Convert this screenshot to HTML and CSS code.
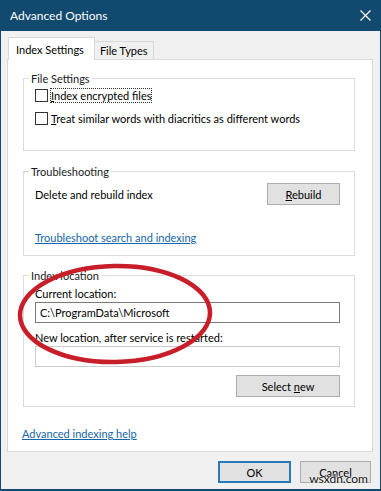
FILE: index.html
```html
<!DOCTYPE html>
<html lang="en">
<head>
    <meta charset="UTF-8">
    <title>Advanced Options</title>
    <link rel="stylesheet" href="styles.css">
</head>
<body>
    <div class="window">
        <div class="titlebar">
            <span>Advanced Options</span>
            <svg class="close" width="11" height="11" viewBox="0 0 11 11">
                <path d="M0.5 0.5 L10.5 10.5 M10.5 0.5 L0.5 10.5" stroke="#fff" stroke-width="1.2" fill="none"/>
            </svg>
        </div>

        <div class="tabs">
            <div class="tab active">Index Settings</div>
            <div class="tab">File Types</div>
        </div>

        <div class="panel">
            <!-- file settings -->
            <fieldset class="group group-files">
                <legend>File Settings</legend>
                <label class="check">
                    <span class="box"></span>
                    <span class="focus"><u>I</u>ndex encrypted files</span>
                </label>
                <label class="check second">
                    <span class="box"></span>
                    <span><u>T</u>reat similar words with diacritics as different words</span>
                </label>
            </fieldset>

            <!-- troubleshooting -->
            <fieldset class="group group-trouble">
                <legend>Troubleshooting</legend>
                <div class="row">
                    <span>Delete and rebuild index</span>
                    <button class="btn btn-rebuild"><u>R</u>ebuild</button>
                </div>
                <a class="link trouble-link" href="#">Troubleshoot search and indexing</a>
            </fieldset>

            <!-- index location -->
            <fieldset class="group group-location">
                <legend>Index location</legend>
                <div class="label">Current location:</div>
                <input class="field" type="text" value="C:\ProgramData\Microsoft" readonly>
                <div class="label second">New location, after service is restarted:</div>
                <input class="field empty" type="text" value="" readonly>
                <div class="row row-end">
                    <button class="btn btn-select">Select <u>n</u>ew</button>
                </div>
            </fieldset>

            <a class="link help-link" href="#">Advanced indexing help</a>
        </div>

        <div class="footer">
            <button class="btn btn-ok">OK</button>
            <button class="btn btn-cancel">Cancel</button>
        </div>

        <svg class="circle" width="381" height="491" viewBox="0 0 381 491">
            <ellipse cx="115" cy="314" rx="95" ry="48" transform="rotate(-1 115 314)" fill="none" stroke="#c81e2a" stroke-width="4.5"/>
        </svg>

        <span class="watermark">wsxdn.com</span>
    </div>
</body>
</html>
```

FILE: styles.css
```css
body {
    margin: 0;
    font-family: 'Lato', 'Noto Sans', sans-serif;
    font-size: 11px;
    color: #000;
}

.window {
    position: relative;
    width: 381px;
    height: 491px;
    box-sizing: border-box;
    background-color: #f0f0f0;
    border-left: 1px solid #124a6f;
    border-right: 1px solid #124a6f;
    border-bottom: 2px solid #124a6f;
    display: flex;
    flex-direction: column;
    overflow: hidden;
    white-space: nowrap;
}

.titlebar {
    height: 31px;
    flex-shrink: 0;
    background-color: #124a6f;
    color: #fff;
    display: flex;
    align-items: center;
    justify-content: space-between;
    padding: 0 9px 0 9px;
    font-size: 12px;
}

.tabs {
    display: flex;
    align-items: flex-end;
    margin-top: 6px;
    padding-left: 7px;
    margin-bottom: -1px;
    position: relative;
    z-index: 1;
}

.tab {
    height: 17px;
    line-height: 18px;
    padding: 0 5px;
    border: 1px solid #d9d9d9;
    border-left: none;
    background-color: #f0f0f0;
}

.tab.active {
    height: 22px;
    line-height: 23px;
    padding: 0 10px 0 7px;
    border-left: 1px solid #d9d9d9;
    border-bottom: none;
    background-color: #fff;
}

.panel {
    margin: 0 7px 0 6px;
    background-color: #fff;
    border: 1px solid #d9d9d9;
    padding: 11px 17px 10px 15px;
    display: flex;
    flex-direction: column;
}

.group {
    margin: 0;
    border: 1px solid #dcdcdc;
    padding: 0 14px 0 11px;
    min-width: 0;
}

.group legend {
    padding: 0 2px;
    margin-left: -6px;
    line-height: 15px;
    color: #1a1a1a;
}

.group-files {
    padding-top: 1px;
    padding-bottom: 23px;
}

.group-trouble {
    margin-top: 13px;
    padding-top: 4px;
    padding-bottom: 10px;
}

.group-location {
    margin-top: 12px;
    padding-top: 3px;
    padding-bottom: 9px;
}

.check {
    display: flex;
    align-items: center;
    height: 17px;
    gap: 3px;
}

.check.second {
    margin-top: 6px;
}

.box {
    width: 11px;
    height: 11px;
    border: 1px solid #333;
    background-color: #fff;
    flex-shrink: 0;
}

.focus {
    outline: 1px dotted #333;
    outline-offset: 0;
}

.row {
    display: flex;
    align-items: center;
    justify-content: space-between;
}

.row-end {
    justify-content: flex-end;
    margin-top: 8px;
}

.btn {
    font-family: inherit;
    font-size: 11px;
    color: #000;
    height: 22px;
    padding: 0;
    background-color: #e1e1e1;
    border: 1px solid #adadad;
}

.btn-rebuild {
    width: 73px;
}

.btn-select {
    width: 104px;
}

.link {
    color: #1565a8;
    text-decoration: underline;
    line-height: 15px;
    align-self: flex-start;
}

.trouble-link {
    display: inline-block;
    margin-top: 25px;
}

.label {
    line-height: 15px;
}

.label.second {
    margin-top: 7px;
}

.field {
    display: block;
    box-sizing: border-box;
    width: 100%;
    height: 21px;
    margin-top: 1px;
    padding: 0 4px;
    font-family: inherit;
    font-size: 11px;
    color: #000;
    border: 1px solid #7a7a7a;
    background-color: #fff;
    outline: none;
}

.field.empty {
    border-color: #cccccc;
}

.help-link {
    margin-top: 19px;
    margin-left: -1px;
}

.footer {
    display: flex;
    justify-content: flex-end;
    gap: 9px;
    padding: 9px 9px 0 0;
}

.btn-ok {
    width: 73px;
    border: 2px solid #2a7ab8;
}

.btn-cancel {
    width: 71px;
}

.circle {
    position: absolute;
    left: -1px;
    top: 0;
    pointer-events: none;
}

.watermark {
    position: absolute;
    right: 12px;
    bottom: 3px;
    font-size: 12px;
    color: #111;
    text-shadow: 0 0 2px #fff, 0 0 2px #fff;
}
```
